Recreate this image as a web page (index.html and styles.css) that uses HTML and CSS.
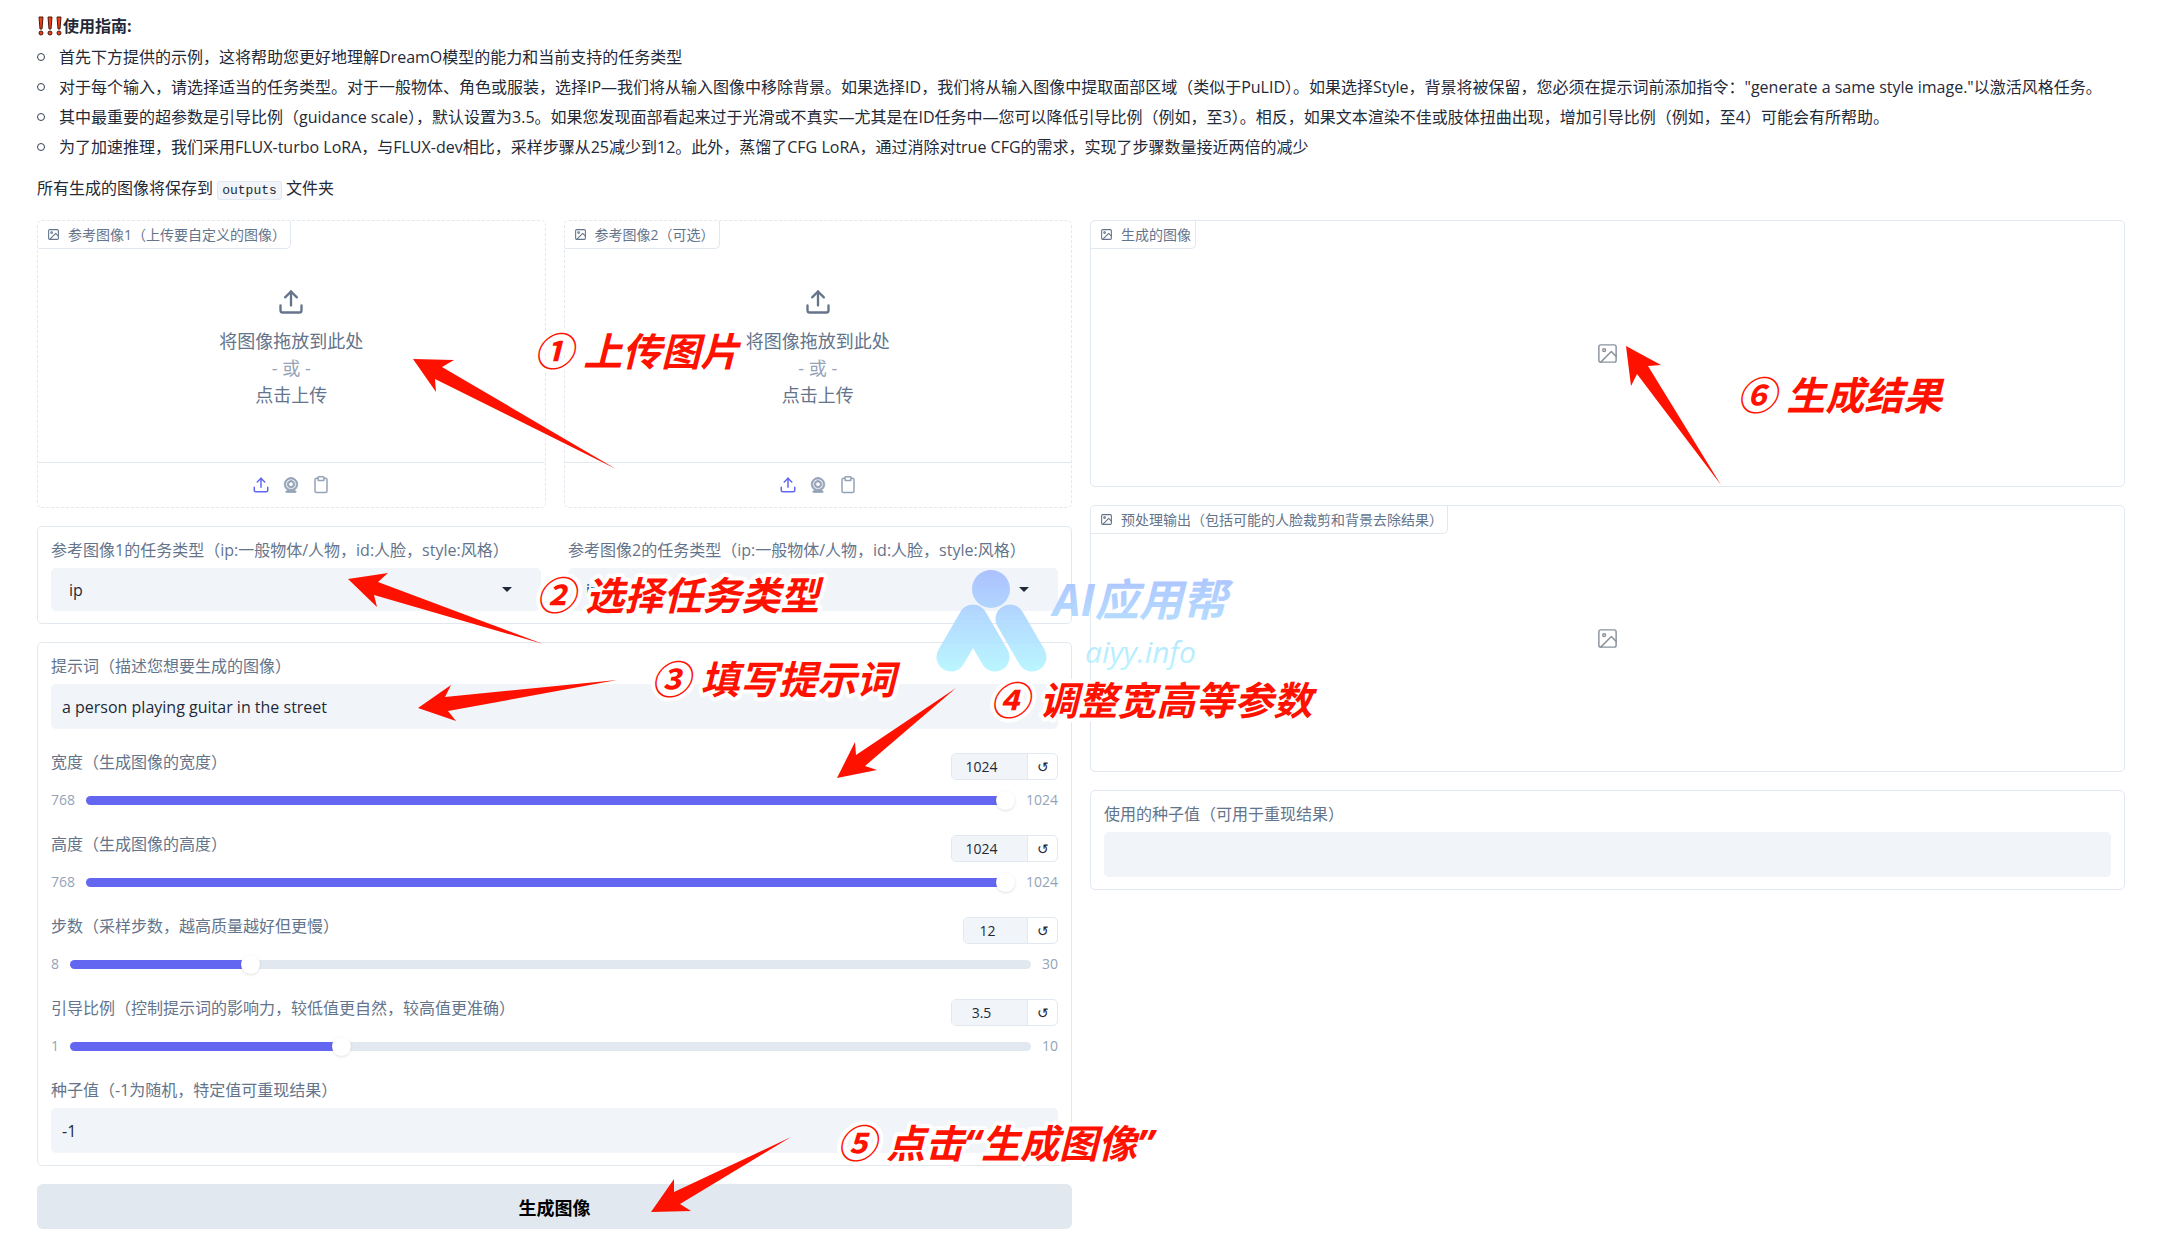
FILE: index.html
```html
<!DOCTYPE html>
<html lang="zh-CN">
<head>
    <meta charset="UTF-8">
    <meta name="viewport" content="width=device-width, initial-scale=1.0">
    <title>DreamO</title>
    <link rel="stylesheet" href="styles.css">
</head>
<body>
    <!-- Shared icons -->
    <svg class="sprite" aria-hidden="true">
        <symbol id="icon-image" viewBox="0 0 24 24">
            <rect x="3" y="3" width="18" height="18" rx="2"/>
            <circle cx="8.5" cy="8.5" r="1.5"/>
            <polyline points="21 15 16 10 5 21"/>
        </symbol>
        <symbol id="icon-upload" viewBox="0 0 24 24">
            <path d="M21 15v4a2 2 0 0 1-2 2H5a2 2 0 0 1-2-2v-4"/>
            <polyline points="17 8 12 3 7 8"/>
            <line x1="12" y1="3" x2="12" y2="15"/>
        </symbol>
        <symbol id="icon-webcam" viewBox="0 0 24 24">
            <path fill="currentColor" stroke-width="1" d="M12 2c-4.963 0-9 4.038-9 9c0 3.328 1.82 6.232 4.513 7.79l-2.067 1.378A1 1 0 0 0 6 22h12a1 1 0 0 0 .555-1.832l-2.067-1.378C19.18 17.232 21 14.328 21 11c0-4.962-4.037-9-9-9zm0 16c-3.859 0-7-3.141-7-7c0-3.86 3.141-7 7-7s7 3.14 7 7c0 3.859-3.141 7-7 7z"/>
            <path fill="currentColor" stroke-width="1" d="M12 6c-2.757 0-5 2.243-5 5s2.243 5 5 5s5-2.243 5-5s-2.243-5-5-5zm0 8c-1.654 0-3-1.346-3-3s1.346-3 3-3s3 1.346 3 3s-1.346 3-3 3z"/>
        </symbol>
        <symbol id="icon-clipboard" viewBox="0 0 24 24">
            <path d="M16 3h2a2 2 0 0 1 2 2v15a2 2 0 0 1-2 2H6a2 2 0 0 1-2-2V5a2 2 0 0 1 2-2h2"/>
            <rect x="8" y="1" width="8" height="5" rx="1"/>
        </symbol>
    </svg>

    <main class="page">
        <section class="guide">
            <h1>
                <svg class="marks" viewBox="0 0 26 20" aria-hidden="true">
                    <path d="M2 1h4l-1 12H3zM11 1h4l-1 12h-2zM20 1h4l-1 12h-2z"/>
                    <circle cx="4" cy="17" r="2"/>
                    <circle cx="13" cy="17" r="2"/>
                    <circle cx="22" cy="17" r="2"/>
                </svg>使用指南:
            </h1>
            <ul>
                <li>首先下方提供的示例，这将帮助您更好地理解DreamO模型的能力和当前支持的任务类型</li>
                <li>对于每个输入，请选择适当的任务类型。对于一般物体、角色或服装，选择IP—我们将从输入图像中移除背景。如果选择ID，我们将从输入图像中提取面部区域（类似于PuLID）。如果选择Style，背景将被保留，您必须在提示词前添加指令："generate a same style image."以激活风格任务。</li>
                <li>其中最重要的超参数是引导比例（guidance scale），默认设置为3.5。如果您发现面部看起来过于光滑或不真实—尤其是在ID任务中—您可以降低引导比例（例如，至3）。相反，如果文本渲染不佳或肢体扭曲出现，增加引导比例（例如，至4）可能会有所帮助。</li>
                <li>为了加速推理，我们采用FLUX-turbo LoRA，与FLUX-dev相比，采样步骤从25减少到12。此外，蒸馏了CFG LoRA，通过消除对true CFG的需求，实现了步骤数量接近两倍的减少</li>
            </ul>
            <p>所有生成的图像将保存到 <code>outputs</code> 文件夹</p>
        </section>

        <div class="columns">
            <div class="column">
                <div class="uploads">
                    <div class="panel upload">
                        <div class="panel-label"><svg class="icon"><use href="#icon-image"/></svg>参考图像1（上传要自定义的图像）</div>
                        <button class="dropzone" type="button">
                            <svg class="icon"><use href="#icon-upload"/></svg>
                            <span>将图像拖放到此处</span>
                            <span class="or">- 或 -</span>
                            <span>点击上传</span>
                        </button>
                        <div class="sources">
                            <button class="active" type="button" aria-label="上传"><svg class="icon"><use href="#icon-upload"/></svg></button>
                            <button type="button" aria-label="摄像头"><svg class="icon"><use href="#icon-webcam"/></svg></button>
                            <button type="button" aria-label="剪贴板"><svg class="icon"><use href="#icon-clipboard"/></svg></button>
                        </div>
                    </div>
                    <div class="panel upload">
                        <div class="panel-label"><svg class="icon"><use href="#icon-image"/></svg>参考图像2（可选）</div>
                        <button class="dropzone" type="button">
                            <svg class="icon"><use href="#icon-upload"/></svg>
                            <span>将图像拖放到此处</span>
                            <span class="or">- 或 -</span>
                            <span>点击上传</span>
                        </button>
                        <div class="sources">
                            <button class="active" type="button" aria-label="上传"><svg class="icon"><use href="#icon-upload"/></svg></button>
                            <button type="button" aria-label="摄像头"><svg class="icon"><use href="#icon-webcam"/></svg></button>
                            <button type="button" aria-label="剪贴板"><svg class="icon"><use href="#icon-clipboard"/></svg></button>
                        </div>
                    </div>
                </div>

                <div class="panel block tasks">
                    <div class="field">
                        <label for="task1">参考图像1的任务类型（ip:一般物体/人物，id:人脸，style:风格）</label>
                        <div class="select">
                            <select id="task1">
                                <option>ip</option>
                                <option>id</option>
                                <option>style</option>
                            </select>
                        </div>
                    </div>
                    <div class="field">
                        <label for="task2">参考图像2的任务类型（ip:一般物体/人物，id:人脸，style:风格）</label>
                        <div class="select">
                            <select id="task2">
                                <option>ip</option>
                                <option>id</option>
                                <option>style</option>
                            </select>
                        </div>
                    </div>
                </div>

                <div class="panel block settings">
                    <div class="field">
                        <label for="prompt">提示词（描述您想要生成的图像）</label>
                        <input class="text" id="prompt" type="text" value="a person playing guitar in the street">
                    </div>
                    <div class="slider">
                        <div class="slider-head">
                            <label for="width">宽度（生成图像的宽度）</label>
                            <div class="number">
                                <input type="number" value="1024" aria-label="宽度">
                                <button type="button" aria-label="重置">↺</button>
                            </div>
                        </div>
                        <div class="slider-row">
                            <span>768</span>
                            <input id="width" type="range" min="768" max="1024" value="1024" style="--fill: 99%">
                            <span>1024</span>
                        </div>
                    </div>
                    <div class="slider">
                        <div class="slider-head">
                            <label for="height">高度（生成图像的高度）</label>
                            <div class="number">
                                <input type="number" value="1024" aria-label="高度">
                                <button type="button" aria-label="重置">↺</button>
                            </div>
                        </div>
                        <div class="slider-row">
                            <span>768</span>
                            <input id="height" type="range" min="768" max="1024" value="1024" style="--fill: 99%">
                            <span>1024</span>
                        </div>
                    </div>
                    <div class="slider">
                        <div class="slider-head">
                            <label for="steps">步数（采样步数，越高质量越好但更慢）</label>
                            <div class="number short">
                                <input type="number" value="12" aria-label="步数">
                                <button type="button" aria-label="重置">↺</button>
                            </div>
                        </div>
                        <div class="slider-row">
                            <span>8</span>
                            <input id="steps" type="range" min="8" max="30" value="12" style="--fill: 18.2%">
                            <span>30</span>
                        </div>
                    </div>
                    <div class="slider">
                        <div class="slider-head">
                            <label for="guidance">引导比例（控制提示词的影响力，较低值更自然，较高值更准确）</label>
                            <div class="number">
                                <input type="number" value="3.5" step="0.1" aria-label="引导比例">
                                <button type="button" aria-label="重置">↺</button>
                            </div>
                        </div>
                        <div class="slider-row">
                            <span>1</span>
                            <input id="guidance" type="range" min="1" max="10" step="0.1" value="3.5" style="--fill: 27.8%">
                            <span>10</span>
                        </div>
                    </div>
                    <div class="field">
                        <label for="seed">种子值（-1为随机，特定值可重现结果）</label>
                        <input class="text" id="seed" type="text" value="-1">
                    </div>
                </div>

                <button class="generate" type="button">生成图像</button>
            </div>

            <div class="column">
                <div class="panel output">
                    <div class="panel-label"><svg class="icon"><use href="#icon-image"/></svg>生成的图像</div>
                    <svg class="icon empty"><use href="#icon-image"/></svg>
                </div>
                <div class="panel output">
                    <div class="panel-label"><svg class="icon"><use href="#icon-image"/></svg>预处理输出（包括可能的人脸裁剪和背景去除结果）</div>
                    <svg class="icon empty"><use href="#icon-image"/></svg>
                </div>
                <div class="panel block">
                    <div class="field">
                        <label for="used-seed">使用的种子值（可用于重现结果）</label>
                        <input class="text" id="used-seed" type="text" readonly>
                    </div>
                </div>
            </div>
        </div>

        <!-- Step notes and watermark drawn over the page -->
        <svg class="notes" viewBox="0 0 2161 1245">
            <defs>
                <linearGradient id="mark" gradientUnits="userSpaceOnUse" x1="0" y1="570" x2="0" y2="672">
                    <stop offset="0" stop-color="#a5bcff"/>
                    <stop offset="1" stop-color="#b4f6ff"/>
                </linearGradient>
            </defs>
            <g class="watermark">
                <circle cx="991" cy="589" r="19" fill="url(#mark)"/>
                <path d="M951 657L973 619L995 657M1010 619L1032 657" fill="none" stroke="url(#mark)" stroke-width="29" stroke-linecap="round" stroke-linejoin="round"/>
                <text class="brand" x="1053" y="616" fill="url(#mark)">AI应用帮</text>
                <text class="site" x="1085" y="663" fill="url(#mark)">aiyy.info</text>
            </g>
            <g class="arrows">
                <path d="M413 359L454 360L442 367L616 469L435 379L436 392Z"/>
                <path d="M348 579L388 573L378 582L543 644L374 595L377 607Z"/>
                <path d="M418 708L451 685L445 697L617 680L448 711L456 721Z"/>
                <path d="M837 778L855 742L856 755L956 688L865 766L877 770Z"/>
                <path d="M651 1212L674 1179L674 1192L791 1137L680 1204L691 1211Z"/>
                <path d="M1626 346L1661 365L1648 366L1721 485L1637 374L1631 386Z"/>
            </g>
            <g class="steps">
                <text x="534" y="366">① 上传图片</text>
                <text x="536" y="610">② 选择任务类型</text>
                <text x="651" y="694">③ 填写提示词</text>
                <text x="990" y="715">④ 调整宽高等参数</text>
                <text x="837" y="1158">⑤ 点击“生成图像”</text>
                <text x="1737" y="410">⑥ 生成结果</text>
            </g>
        </svg>
    </main>
</body>
</html>
```
FILE: styles.css
```css
* {
    box-sizing: border-box;
}
body {
    margin: 0;
    background: #fff;
    color: #1f2937;
    font-family: "Open Sans", "Noto Sans CJK SC", sans-serif;
    font-size: 16px;
    line-height: 22px;
}
button, input, select {
    font-family: inherit;
    color: inherit;
    margin: 0;
}
button {
    background: none;
    border: none;
    padding: 0;
    cursor: pointer;
}
.sprite {
    display: none;
}
.icon {
    fill: none;
    stroke: currentColor;
    stroke-width: 2;
    stroke-linecap: round;
    stroke-linejoin: round;
    flex: none;
}
.page {
    position: relative;
    padding: 11px 36px 14px 37px;
}

/* Guide text */
.guide {
    line-height: 30px;
}
.guide h1 {
    display: flex;
    align-items: center;
    margin: 0;
    font-size: 16px;
    line-height: 30px;
}
.marks {
    width: 26px;
    height: 20px;
    fill: #f03c14;
    stroke: #4a1a10;
    stroke-width: 1;
}
.guide ul {
    list-style: none;
    margin: 1px 0 11px;
    padding: 0;
}
.guide li {
    display: flex;
    align-items: center;
    gap: 14px;
}
.guide li::before {
    content: "";
    flex: none;
    width: 6px;
    height: 6px;
    border: 1px solid #334155;
    border-radius: 50%;
}
.guide p {
    margin: 0 0 14px;
}
.guide code {
    padding: 1px 4px;
    border: 1px solid #e2e8f0;
    border-radius: 3px;
    background: #f1f5f9;
    font-family: "Liberation Mono", monospace;
    font-size: 13px;
}

/* Layout */
.columns {
    display: grid;
    grid-template-columns: 1fr 1fr;
    align-items: start;
    gap: 18px;
}
.column {
    display: flex;
    flex-direction: column;
    gap: 18px;
}
.panel {
    border: 1px solid #e2e8f0;
    border-radius: 5px;
}
.panel-label {
    display: flex;
    align-items: center;
    align-self: flex-start;
    gap: 8px;
    height: 28px;
    padding: 0 4px 0 9px;
    border: solid #e2e8f0;
    border-width: 0 1px 1px 0;
    border-radius: 0 0 5px 0;
    color: #64748b;
    font-size: 14px;
}
.panel-label .icon {
    width: 13px;
    height: 13px;
}

/* Image uploads */
.uploads {
    display: grid;
    grid-template-columns: 1fr 1fr;
    gap: 18px;
}
.upload {
    display: flex;
    flex-direction: column;
    min-height: 288px;
    border-style: dashed;
}
.dropzone {
    flex: 1;
    display: flex;
    flex-direction: column;
    align-items: center;
    justify-content: center;
    padding-bottom: 14px;
    color: #64748b;
    font-size: 18px;
    line-height: 27px;
}
.dropzone .icon {
    width: 28px;
    height: 28px;
    margin-bottom: 12px;
}
.or {
    color: #94a3b8;
}
.sources {
    display: flex;
    align-items: center;
    justify-content: center;
    gap: 12px;
    height: 45px;
    border-top: 1px solid #e2e8f0;
    color: #94a3b8;
}
.sources button {
    display: flex;
}
.sources .icon {
    width: 18px;
    height: 18px;
}
.sources .active {
    color: #6366f1;
}

/* Form */
.block {
    padding: 12px 13px;
}
.tasks {
    display: grid;
    grid-template-columns: 1fr 1fr;
    gap: 27px;
}
.settings {
    display: flex;
    flex-direction: column;
    gap: 22px;
}
.field {
    display: flex;
    flex-direction: column;
    gap: 7px;
}
label {
    color: #64748b;
}
.text {
    width: 100%;
    height: 45px;
    padding: 0 11px;
    border: none;
    border-radius: 5px;
    background: #f1f5f9;
    font-size: 16px;
}
.select {
    position: relative;
}
.select select {
    display: block;
    appearance: none;
    width: 100%;
    height: 43px;
    padding: 0 18px;
    border: none;
    border-radius: 5px;
    background: #f1f5f9;
    font-size: 16px;
}
.select::after {
    content: "";
    position: absolute;
    right: 29px;
    top: 19px;
    border: 5px solid transparent;
    border-top-color: #1f2937;
    border-bottom: none;
    pointer-events: none;
}
.slider-head {
    display: flex;
    align-items: flex-start;
    justify-content: space-between;
    margin-bottom: 9px;
}
.number {
    display: flex;
    width: 107px;
    height: 27px;
    margin-top: 2px;
    border: 1px solid #e2e8f0;
    border-radius: 5px;
    overflow: hidden;
}
.number.short {
    width: 95px;
}
.number input {
    appearance: textfield;
    flex: 1;
    min-width: 0;
    padding: 0 16px 0 0;
    border: none;
    background: #f1f5f9;
    font-size: 14px;
    text-align: center;
}
.number input::-webkit-inner-spin-button {
    display: none;
}
.number button {
    width: 30px;
    border-left: 1px solid #e2e8f0;
    font-size: 14px;
}
.slider-row {
    display: flex;
    align-items: center;
    gap: 11px;
    color: #94a3b8;
    font-size: 14px;
}
.slider-row input {
    appearance: none;
    flex: 1;
    min-width: 0;
    height: 9px;
    border-radius: 5px;
    background: linear-gradient(to right, #6366f1 var(--fill), #e2e8f0 var(--fill));
}
.slider-row input::-webkit-slider-thumb {
    appearance: none;
    width: 19px;
    height: 19px;
    border-radius: 50%;
    background: #fff;
    box-shadow: 0 1px 3px rgba(0, 0, 0, 0.12);
}
.generate {
    height: 45px;
    border-radius: 6px;
    background: #e2e8f0;
    color: #000;
    font-size: 18px;
    font-weight: bold;
}

/* Image outputs */
.output {
    display: grid;
    min-height: 267px;
}
.output > * {
    grid-area: 1 / 1;
    justify-self: start;
}
.output .empty {
    place-self: center;
    width: 23px;
    height: 23px;
    color: #8b929c;
    stroke-width: 1.5;
}

/* Notes */
.notes {
    position: absolute;
    left: 0;
    top: 0;
    width: 100%;
    pointer-events: none;
    font-style: italic;
}
.steps {
    font-size: 39px;
    font-weight: bold;
    fill: #ff1100;
    stroke: #fff;
    stroke-width: 8px;
    stroke-linejoin: round;
    paint-order: stroke;
}
.arrows {
    fill: #ff1100;
}
.watermark {
    opacity: 0.9;
}
.brand {
    font-size: 44px;
    font-weight: bold;
}
.site {
    font-size: 30px;
}
```
